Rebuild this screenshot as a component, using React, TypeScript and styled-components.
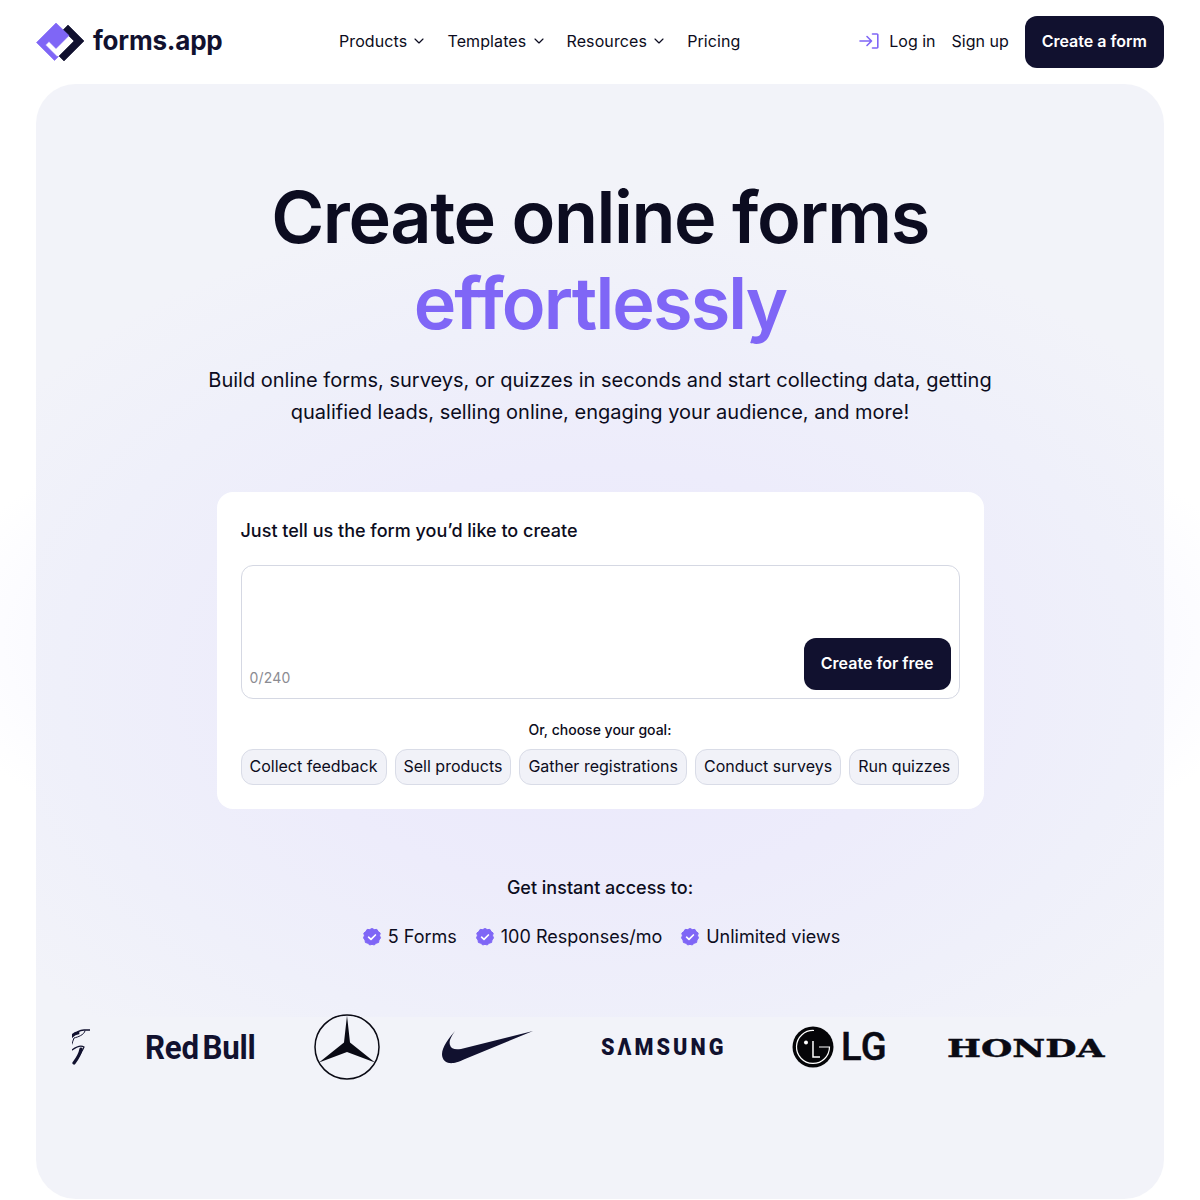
import React from 'react';
import styled, { createGlobalStyle } from 'styled-components';
import { ChevronDown } from 'lucide-react';

const GlobalStyle = createGlobalStyle`
  html, body {
    margin: 0;
    padding: 0;
    background: #fff;
    color: #0c0c20;
    font-family: Inter, "Liberation Sans", sans-serif;
  }
  * { box-sizing: border-box; }
`;

const Page = styled.div`
  width: 1200px;
  height: 1200px;
  overflow: hidden;
  background: radial-gradient(ellipse 680px 280px at 600px 640px, #f6f5fe 0%, #fafaff 80%, #ffffff 100%);
`;

const Header = styled.header`
  height: 84px;
  padding: 16px 36px;
  display: flex;
  align-items: center;
`;

const Brand = styled.a`
  width: 303px;
  display: flex;
  align-items: center;
  gap: 8px;
`;

const BrandName = styled.span`
  margin-bottom: 4px;
  font-family: Inter, sans-serif;
  font-size: 26px;
  font-weight: 700;
  letter-spacing: -0.2px;
  color: #11112f;
`;

const Nav = styled.nav`
  display: flex;
  align-items: center;
  gap: 20px;
  flex: 1;
  padding-bottom: 2px;
`;

const NavItem = styled.a`
  display: flex;
  align-items: center;
  gap: 4.2px;
  font-size: 16px;
  font-weight: 400;
  letter-spacing: 0.1px;
`;

const Actions = styled.div`
  display: flex;
  align-items: center;
  gap: 16px;
`;

const TextLink = styled.a`
  display: flex;
  align-items: center;
  gap: 10px;
  padding-bottom: 2px;
  font-size: 16px;
`;

const DarkButton = styled.button`
  height: 52px;
  padding: 0 17px 2px;
  border: 0;
  border-radius: 12px;
  background: #11112f;
  color: #fff;
  font-family: inherit;
  font-size: 16px;
  font-weight: 600;
`;

const Hero = styled.main`
  height: 1115px;
  margin: 0 36px;
  padding-top: 90px;
  border-radius: 40px;
  display: flex;
  flex-direction: column;
  align-items: center;
  background-color: #f2f3f9;
  background-image: radial-gradient(ellipse 720px 480px at 564px 596px, #eae8fb 0%, #edecfb 45%, #eff0fa 75%, #f2f3f9 100%);
  background-size: 100% 933px;
  background-repeat: no-repeat;
`;

const Title = styled.h1`
  margin: 0;
  font-size: 72px;
  line-height: 86px;
  font-weight: 600;
  letter-spacing: -1.4px;
  text-align: center;
`;

const Accent = styled.span`
  display: block;
  letter-spacing: -1.9px;
  color: #7f66f6;
`;

const Lead = styled.p`
  margin: 18px 0 0;
  font-size: 20px;
  line-height: 32px;
  text-align: center;
`;

const Card = styled.section`
  width: 767px;
  height: 317px;
  margin-top: 64px;
  padding: 24px;
  border-radius: 16px;
  background: #fff;
`;

const CardLabel = styled.div`
  font-size: 18px;
  line-height: 30px;
  font-weight: 500;
`;

const Prompt = styled.div`
  height: 134px;
  margin-top: 19px;
  padding: 0 8px 8px;
  border: 1px solid #d5d8e3;
  border-radius: 12px;
  display: flex;
  align-items: flex-end;
  justify-content: space-between;
`;

const Counter = styled.span`
  font-size: 14px;
  line-height: 24px;
  color: #8b8b92;
  letter-spacing: 0.2px;
`;

const GoalLabel = styled.div`
  margin-top: 21px;
  text-align: center;
  font-size: 14px;
  line-height: 20px;
  font-weight: 500;
`;

const Chips = styled.div`
  margin-top: 9px;
  display: flex;
  gap: 8px;
`;

const Chip = styled.button`
  height: 36px;
  padding: 0 8px 2px;
  border: 1px solid #d9dce7;
  border-radius: 12px;
  background: #f1f2f8;
  color: #0c0c20;
  font-family: inherit;
  font-size: 16px;
`;

const AccessTitle = styled.div`
  margin-top: 64px;
  font-size: 18px;
  line-height: 30px;
  font-weight: 500;
`;

const Features = styled.div`
  margin-top: 19px;
  display: flex;
  gap: 18px;
  transform: translateX(1px);
`;

const Feature = styled.div`
  display: flex;
  align-items: center;
  gap: 6px;
  font-size: 18px;
  line-height: 30px;
`;

const LogoRow = styled.div`
  width: 100%;
  margin-top: 60px;
  padding-left: 36px;
  height: 70px;
  display: flex;
  align-items: center;
`;

const LogoSlot = styled.div<{ $width: number; $after: number }>`
  flex: none;
  width: ${(p) => p.$width}px;
  margin-right: ${(p) => p.$after}px;
  display: flex;
  align-items: center;
`;

const RedBull = styled.span`
  display: inline-block;
  transform: scaleX(0.92);
  transform-origin: left center;
  font-family: Roboto, sans-serif;
  font-size: 34px;
  font-weight: 700;
  letter-spacing: -0.3px;
  word-spacing: -4px;
  white-space: nowrap;
  color: #11112f;
`;

const Samsung = styled.span`
  display: inline-block;
  transform: scaleX(0.9);
  transform-origin: left center;
  font-family: Roboto, sans-serif;
  font-size: 24px;
  font-weight: 900;
  letter-spacing: 3.4px;
  white-space: nowrap;
  color: #11112f;
`;

const LgText = styled.span`
  margin-left: 7px;
  font-family: Roboto, sans-serif;
  font-size: 38px;
  font-weight: 500;
  letter-spacing: 0.4px;
  -webkit-text-stroke: 0.5px #0a0a14;
  color: #0a0a14;
`;

const Honda = styled.span`
  display: inline-block;
  margin-top: 3px;
  transform: scaleX(1.5);
  transform-origin: left center;
  font-family: "DejaVu Serif", serif;
  font-size: 24px;
  font-weight: 700;
  line-height: 1;
  -webkit-text-stroke: 0.4px #0a0a14;
  color: #0a0a14;
`;

const BrandMark = () => (
  <svg width="49" height="40" viewBox="0 0 49 40" strokeLinejoin="round">
    <path d="M27 8 L32 3 L48 19 L28 39 L23 34 L38 19 Z" fill="#11112f" stroke="#11112f" strokeWidth="0.6" />
    <path
      d="M0.5 20.5 L20 1 L33 13.500 L20 26.500 L13 19.500 L9.500 23 L21 34.500 L22.500 34.500 L18.500 38.500 Z"
      fill="#7f66f6"
      stroke="#7f66f6"
      strokeWidth="0.6"
    />
  </svg>
);

const LoginIcon = () => (
  <svg width="20" height="16" viewBox="0 0 20 16" fill="none" stroke="#7f66f6" strokeWidth="1.6" strokeLinecap="round" strokeLinejoin="round">
    <path d="M1 8 H12 M8 3.5 L12.5 8 L8 12.5" />
    <path d="M13.5 1 H18 A0.8 0.8 0 0 1 18.8 1.8 V14.2 A0.8 0.8 0 0 1 18 15 H13.5" />
  </svg>
);

const CheckBadge = () => (
  <svg width="20" height="20" viewBox="-1 -1 20 20">
    <path
      d="M9 0.5 L11.3 1.6 L13.9 1.4 L15.2 3.6 L17.2 5.1 L16.6 7.7 L17.5 9.9 L16 12 L15.6 14.5 L13.1 15.2 L11.3 17 L9 16.3 L6.7 17 L4.9 15.2 L2.4 14.5 L2 12 L0.5 9.9 L1.4 7.7 L0.8 5.1 L2.8 3.6 L4.1 1.4 L6.7 1.6 Z"
      fill="#7f66f6"
      stroke="#7f66f6"
      strokeLinejoin="round"
    />
    <path d="M5.6 9.2 L8 11.4 L12.4 7" fill="none" stroke="#fff" strokeWidth="1.7" strokeLinecap="round" strokeLinejoin="round" />
  </svg>
);

const ScriptLogo = () => (
  <svg width="18" height="38" viewBox="0 0 18 38" fill="none" stroke="#11112f" strokeLinecap="round">
    <path d="M0 9 C3 5 8 2 12 2 L18 2" strokeWidth="1.3" />
    <path d="M0 8 C2 6 4 5 6 5" strokeWidth="3" />
    <path d="M13 3 C12 7 6 9 2 10 C1 13 0 15 0 16" strokeWidth="1" />
    <path d="M0 22 C4 19 9 17 12 19 C10 24 5 31 2 35" strokeWidth="1.2" />
    <path d="M9 21 C8 27 5 31 2 35" strokeWidth="3.2" />
  </svg>
);

const MercedesLogo = () => (
  <svg width="66" height="66" viewBox="0 0 66 66">
    <circle cx="33" cy="33" r="32" fill="none" stroke="#0a0a14" strokeWidth="1.5" />
    <path d="M33 1.5 L36 28.5 L61 48.5 L33 38 L5 48.5 L30 28.5 Z" fill="#0a0a14" />
  </svg>
);

const NikeLogo = () => (
  <svg width="93" height="34" viewBox="0 0 93 34">
    <path
      d="M14 1 C9 8 8 12 9 15 C10 19 14 20 20 19 L92 1 L24 29 C16 33 11 33.500 8 33 C3 32 1 28 1 24 C1 17 8 8 14 1 Z"
      fill="#11112f"
    />
  </svg>
);

const LgMark = () => (
  <svg width="42" height="42" viewBox="0 0 42 42">
    <circle cx="21" cy="21" r="20.500" fill="#050508" />
    <path d="M27 21 H37.500 A16.500 16.500 0 1 1 22 4.500" fill="none" stroke="#fff" strokeWidth="1.200" />
    <circle cx="14" cy="16.500" r="2" fill="#fff" />
    <path d="M21 15 V31 H28" fill="none" stroke="#fff" strokeWidth="1.500" />
  </svg>
);

const navItems = ['Products', 'Templates', 'Resources'];
const goals = ['Collect feedback', 'Sell products', 'Gather registrations', 'Conduct surveys', 'Run quizzes'];
const perks = ['5 Forms', '100 Responses/mo', 'Unlimited views'];

export default function App() {
  return (
    <Page>
      <GlobalStyle />
      <Header>
        <Brand>
          <BrandMark />
          <BrandName>forms.app</BrandName>
        </Brand>
        <Nav>
          {navItems.map((item) => (
            <NavItem key={item}>
              {item}
              <ChevronDown size={16} strokeWidth={1.75} />
            </NavItem>
          ))}
          <NavItem>Pricing</NavItem>
        </Nav>
        <Actions>
          <TextLink>
            <LoginIcon />
            Log in
          </TextLink>
          <TextLink>Sign up</TextLink>
          <DarkButton>Create a form</DarkButton>
        </Actions>
      </Header>
      <Hero>
        <Title>
          Create online forms
          <Accent>effortlessly</Accent>
        </Title>
        <Lead>
          Build online forms, surveys, or quizzes in seconds and start collecting data, getting
          <br />
          qualified leads, selling online, engaging your audience, and more!
        </Lead>
        <Card>
          <CardLabel>Just tell us the form you’d like to create</CardLabel>
          <Prompt>
            <Counter>0/240</Counter>
            <DarkButton>Create for free</DarkButton>
          </Prompt>
          <GoalLabel>Or, choose your goal:</GoalLabel>
          <Chips>
            {goals.map((goal) => (
              <Chip key={goal}>{goal}</Chip>
            ))}
          </Chips>
        </Card>
        <AccessTitle>Get instant access to:</AccessTitle>
        <Features>
          {perks.map((perk) => (
            <Feature key={perk}>
              <CheckBadge />
              {perk}
            </Feature>
          ))}
        </Features>
        <LogoRow>
          <LogoSlot $width={18} $after={55}><ScriptLogo /></LogoSlot>
          <LogoSlot $width={110} $after={59}><RedBull>Red Bull</RedBull></LogoSlot>
          <LogoSlot $width={66} $after={61}><MercedesLogo /></LogoSlot>
          <LogoSlot $width={93} $after={67}><NikeLogo /></LogoSlot>
          <LogoSlot $width={123} $after={68}><Samsung>SΛMSUNG</Samsung></LogoSlot>
          <LogoSlot $width={95} $after={60}><LgMark /><LgText>LG</LgText></LogoSlot>
          <LogoSlot $width={158} $after={0}><Honda>HONDA</Honda></LogoSlot>
        </LogoRow>
      </Hero>
    </Page>
  );
}
